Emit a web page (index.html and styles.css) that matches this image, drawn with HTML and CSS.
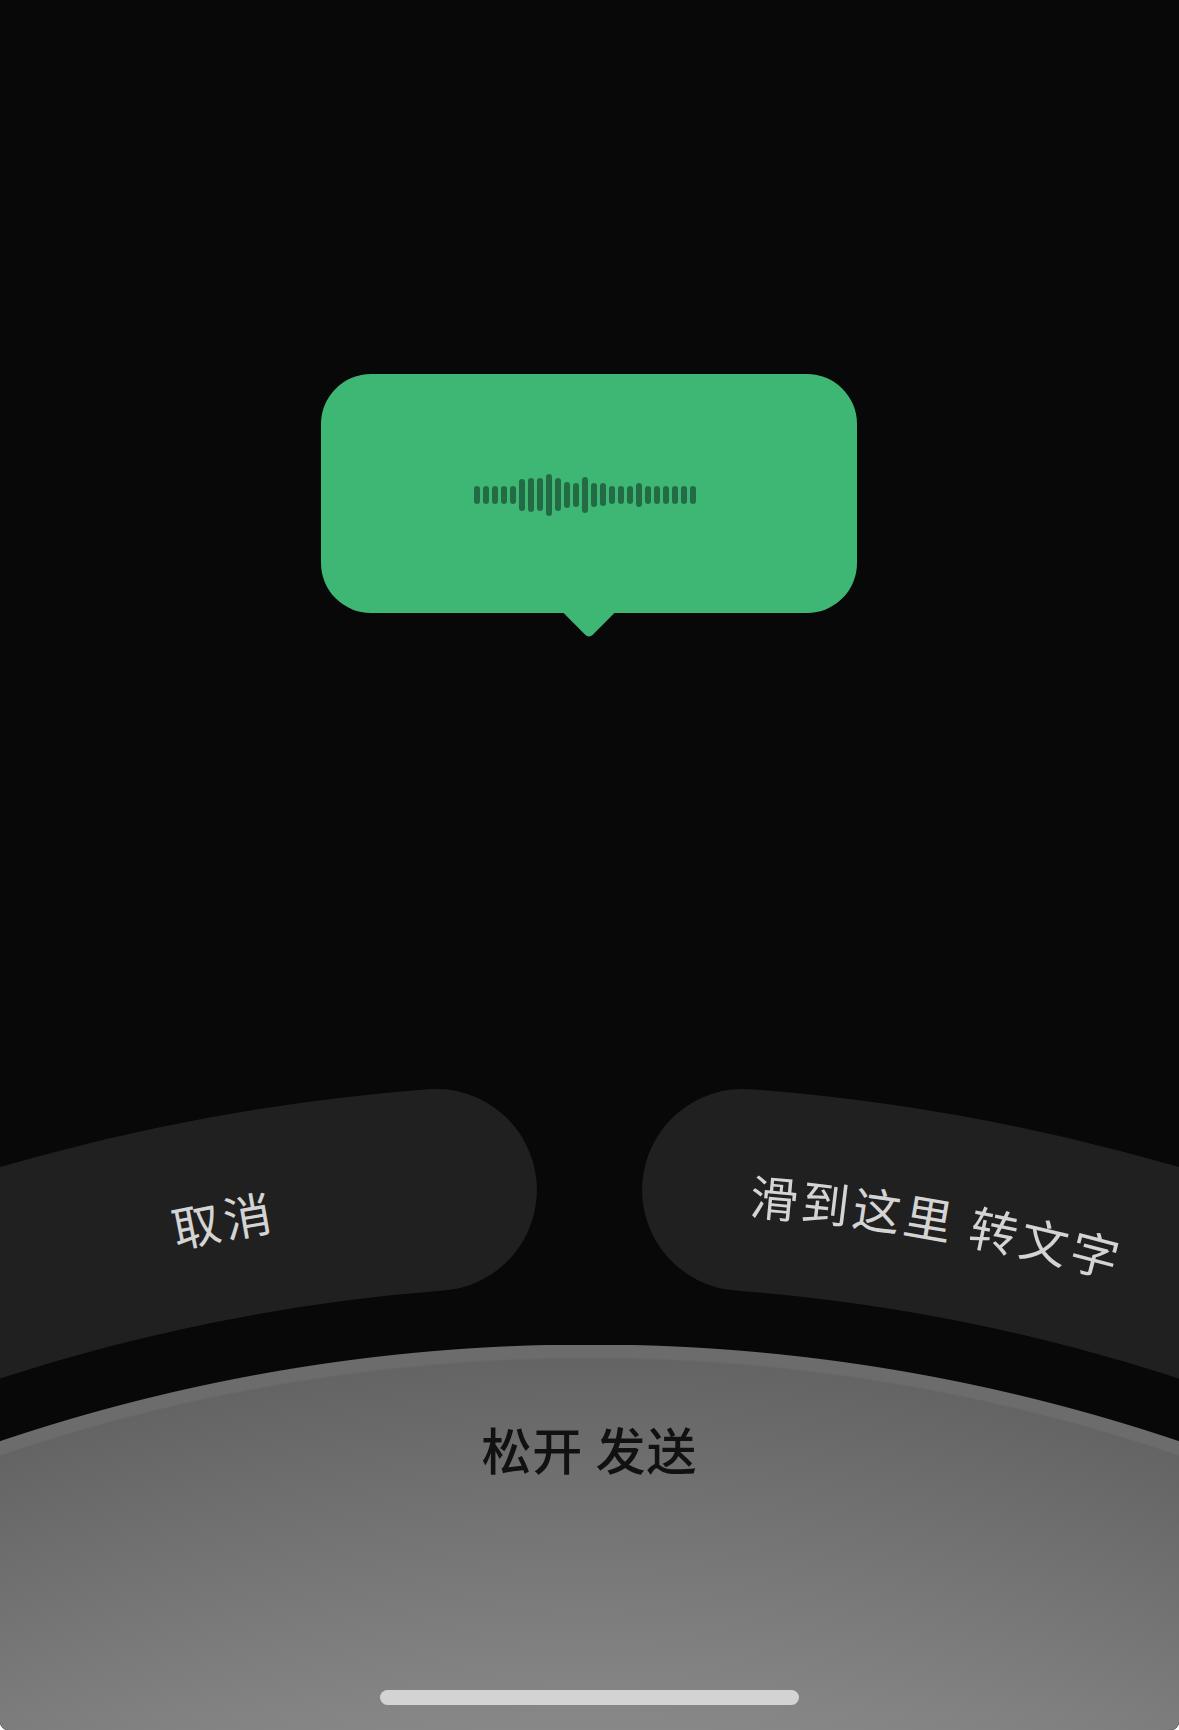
FILE: index.html
```html
<!DOCTYPE html>
<html lang="zh-CN">
<head>
    <meta charset="UTF-8">
    <meta name="viewport" content="width=device-width, initial-scale=1.0">
    <title>语音输入</title>
    <link rel="stylesheet" href="styles.css">
</head>
<body>

    <div class="stage">
        <div class="bubble">
            <div class="wave">
                <span style="height: 18px"></span>
                <span style="height: 18px"></span>
                <span style="height: 18px"></span>
                <span style="height: 18px"></span>
                <span style="height: 18px"></span>
                <span style="height: 32px"></span>
                <span style="height: 34px"></span>
                <span style="height: 33px"></span>
                <span style="height: 42px"></span>
                <span style="height: 33px"></span>
                <span style="height: 26px"></span>
                <span style="height: 24px"></span>
                <span style="height: 36px"></span>
                <span style="height: 24px"></span>
                <span style="height: 23px"></span>
                <span style="height: 18px"></span>
                <span style="height: 18px"></span>
                <span style="height: 18px"></span>
                <span style="height: 24px"></span>
                <span style="height: 18px"></span>
                <span style="height: 18px"></span>
                <span style="height: 18px"></span>
                <span style="height: 18px"></span>
                <span style="height: 18px"></span>
                <span style="height: 18px"></span>
            </div>
        </div>
    </div>

    <div class="controls">
        <svg class="arcs" width="1179" height="345" viewBox="0 1000 1179 345">
            <path id="arc-left" class="band" d="M -258.3 1371.9 A 2006 2006 0 0 1 435.9 1189.9"/>
            <path id="arc-right" class="band" d="M 743.1 1189.9 A 2006 2006 0 0 1 1437.3 1371.9"/>
            <text class="band-label">
                <textPath href="#arc-left" startOffset="507" text-anchor="middle">取消</textPath>
            </text>
            <text class="band-label" dy="3">
                <textPath href="#arc-right" startOffset="197" text-anchor="middle">滑到这里 转文字</textPath>
            </text>
        </svg>
    </div>

    <div class="sheet">
        <div class="send-label">松开 发送</div>
        <div class="home-bar"></div>
    </div>

</body>
</html>
```

FILE: styles.css
```css
* {
    margin: 0;
    padding: 0;
    box-sizing: border-box;
}

html {
    background: #fff;
}

body {
    width: 1179px;
    height: 1730px;
    background: #080808;
    font-family: "Noto Sans CJK SC", "Noto Sans", sans-serif;
    display: flex;
    flex-direction: column;
    overflow: hidden;
    border-radius: 0 0 8px 8px;
}

/* top area with the recording bubble */
.stage {
    height: 1000px;
    flex: none;
    padding-top: 374px;
}

.bubble {
    position: relative;
    width: 536px;
    height: 239px;
    margin-left: 321px;
    background: #3eb775;
    border-radius: 50px;
    display: flex;
    justify-content: center;
    align-items: center;
}

.bubble::after {
    content: "";
    position: absolute;
    left: 50%;
    bottom: -18px;
    width: 36px;
    height: 36px;
    margin-left: -18px;
    background: #3eb775;
    border-radius: 0 0 5px 0;
    transform: rotate(45deg);
}

.wave {
    display: flex;
    align-items: center;
    gap: 3px;
    margin-left: -8px;
    margin-top: 2px;
}

.wave span {
    width: 6px;
    background: #236b44;
    border-radius: 3px;
}

/* curved cancel / to-text bands */
.controls {
    height: 345px;
    flex: none;
}

.arcs {
    display: block;
    overflow: visible;
}

.band {
    fill: none;
    stroke: #202020;
    stroke-width: 202;
    stroke-linecap: round;
}

.band-label {
    fill: #d4d4d4;
    font-size: 48px;
    letter-spacing: 4px;
    dominant-baseline: central;
}

/* bottom send area */
.sheet {
    height: 385px;
    flex: none;
    background: radial-gradient(circle 1846px at 50% 1845px,
        #888888 1460px,
        #646464 1831px,
        #6c6c6c 1833px,
        #6c6c6c 1845px,
        rgba(108, 108, 108, 0) 1846px);
    display: flex;
    flex-direction: column;
    align-items: center;
    justify-content: space-between;
    padding: 78px 0 25px;
}

.send-label {
    font-size: 50px;
    line-height: 50px;
    font-weight: 500;
    letter-spacing: 1px;
    color: #111;
}

.home-bar {
    width: 419px;
    height: 15px;
    border-radius: 8px;
    background: #d3d3d3;
}
```
